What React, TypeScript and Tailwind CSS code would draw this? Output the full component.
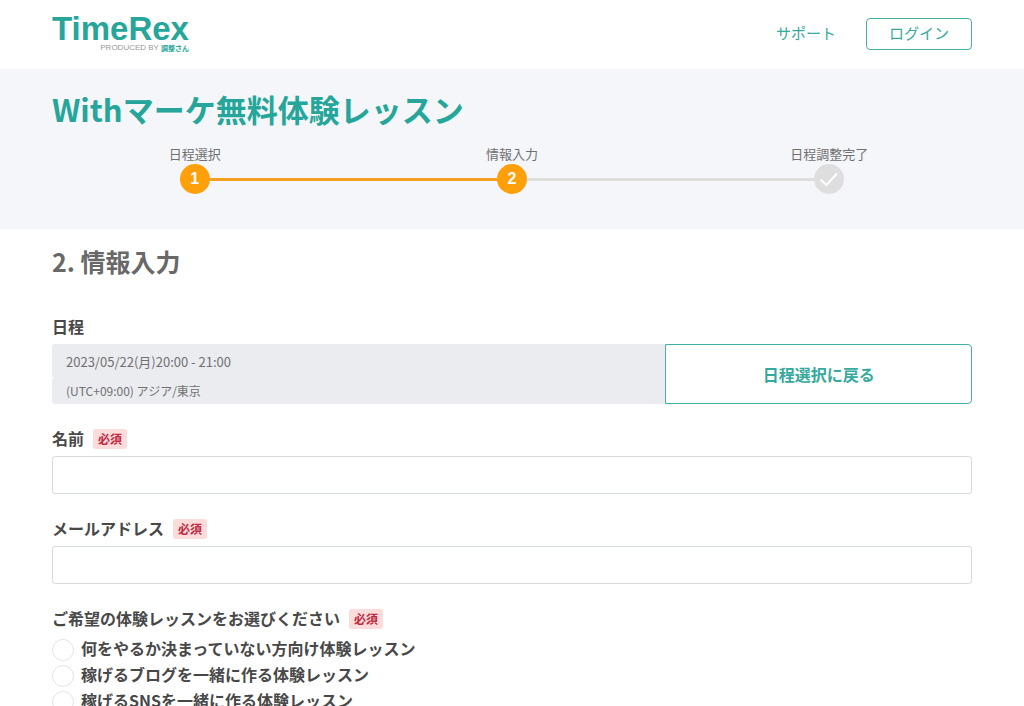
import React from 'react';

const lessons = [
  '何をやるか決まっていない方向け体験レッスン',
  '稼げるブログを一緒に作る体験レッスン',
  '稼げるSNSを一緒に作る体験レッスン',
];

function Required() {
  return (
    <span className="rounded-[3px] bg-[#fcdcda] px-[5px] text-[12px] leading-5 font-bold text-[#c1273f]">
      必須
    </span>
  );
}

function Logo() {
  return (
    <a href="#top" className="flex flex-col items-end font-['Liberation_Sans',sans-serif]">
      <span className="text-[33px] leading-7 font-bold text-[#26a69a]">TimeRex</span>
      <span className="flex items-center gap-[2px] leading-[10px]">
        <span className="text-[8px] text-[#999999]">PRODUCED BY</span>
        <span className="font-['Noto_Sans_CJK_JP',sans-serif] text-[7px] font-bold text-[#26a69a]">
          調整さん
        </span>
      </span>
    </a>
  );
}

function Step({ label, active, children }: { label: string; active?: boolean; children: React.ReactNode }) {
  return (
    <li className="flex flex-col items-center">
      <span className="text-[13px] leading-5 text-[#707070]">{label}</span>
      <span
        className={
          active
            ? "z-10 flex size-[30px] items-center justify-center rounded-full bg-[#ff9f0a] font-['Liberation_Sans',sans-serif] text-[16px] leading-5 font-bold text-white"
            : 'z-10 flex size-[30px] items-center justify-center rounded-full bg-[#dedede] text-white'
        }
      >
        {children}
      </span>
    </li>
  );
}

function Field({ id, label, type }: { id: string; label: string; type: string }) {
  return (
    <div>
      <div className="flex h-5 items-center gap-[9px]">
        <label htmlFor={id} className="pb-[2px] text-[16px] leading-5 font-bold">
          {label}
        </label>
        <Required />
      </div>
      <input
        id={id}
        type={type}
        className="mt-[7px] block h-[38px] w-full rounded-[3px] border border-[#d5dadd] bg-white px-3 text-[14px] outline-none focus:border-[#26a69a]"
      />
    </div>
  );
}

export default function App() {
  return (
    <div id="top" className="bg-white font-['Noto_Sans_CJK_JP',sans-serif] text-[#484848]">
      <header className="flex h-[69px] items-center justify-between px-[52px] pb-[2px]">
        <Logo />
        <nav className="flex items-center gap-[30px] text-[15px] text-[#35a99d]">
          <a href="#support">サポート</a>
          <button
            type="button"
            className="flex h-8 w-[106px] items-center justify-center rounded-[4px] border border-[#45b0a5]"
          >
            ログイン
          </button>
        </nav>
      </header>

      <section className="bg-[#f4f6fa] pt-5 pb-[35px]">
        <h1 className="px-[52px] text-[31px] leading-10 font-bold text-[#26a69a]">Withマーケ無料体験レッスン</h1>
        <div className="relative mt-[15px] px-9">
          <div className="absolute inset-x-9 top-[34px] flex px-[16.667%]">
            <span className="h-[3px] flex-1 bg-[#f6a120]" />
            <span className="h-[3px] flex-1 bg-[#dedede]" />
          </div>
          <ol className="relative grid grid-cols-3">
            <Step label="日程選択" active>
              1
            </Step>
            <Step label="情報入力" active>
              2
            </Step>
            <Step label="日程調整完了">
              <svg viewBox="0 0 30 30" className="size-[30px]" fill="none" stroke="currentColor" strokeWidth="2" aria-hidden="true">
                <path d="M6.5 15.5 12.5 21 23 9.5" />
              </svg>
            </Step>
          </ol>
        </div>
      </section>

      <main className="px-[52px] pt-[14px]">
        <h2 className="text-[25px] leading-9 font-bold text-[#686868]">2. 情報入力</h2>

        <h3 className="mt-[37px] text-[16px] leading-5 font-bold">日程</h3>
        <div className="mt-2 grid grid-cols-3 text-[#707070]">
          <div className="col-span-2">
            <p className="rounded-l-[3px] bg-[#ebecf0] px-[14px] pt-[2px] text-[13px] leading-8">
              2023/05/22(月)20:00 - 21:00
            </p>
            <p className="rounded-l-[3px] bg-[#ebecf0] px-[14px] text-[12px] leading-[26px]">
              (UTC+09:00) アジア/東京
            </p>
          </div>
          <button
            type="button"
            className="rounded-r-[4px] border border-[#45b0a5] text-[16px] font-bold text-[#35a99d]"
          >
            日程選択に戻る
          </button>
        </div>

        <form className="mt-[25px] flex flex-col gap-[25px]">
          <Field id="name" label="名前" type="text" />
          <Field id="email" label="メールアドレス" type="email" />
          <fieldset>
            <legend className="flex h-5 items-center gap-[9px] text-[16px] leading-5 font-bold">
              <span className="pb-[2px]">ご希望の体験レッスンをお選びください</span>
              <Required />
            </legend>
            <div className="mt-2 flex flex-col">
              {lessons.map((lesson) => (
                <label key={lesson} className="flex h-[26px] items-center gap-[7px] text-[16px] leading-5 font-bold">
                  <input
                    type="radio"
                    name="lesson"
                    value={lesson}
                    className="size-[22px] shrink-0 appearance-none rounded-full border border-[#e2e4ec] bg-white checked:border-[6px] checked:border-[#26a69a]"
                  />
                  <span className="pb-1">{lesson}</span>
                </label>
              ))}
            </div>
          </fieldset>
        </form>
      </main>
    </div>
  );
}
